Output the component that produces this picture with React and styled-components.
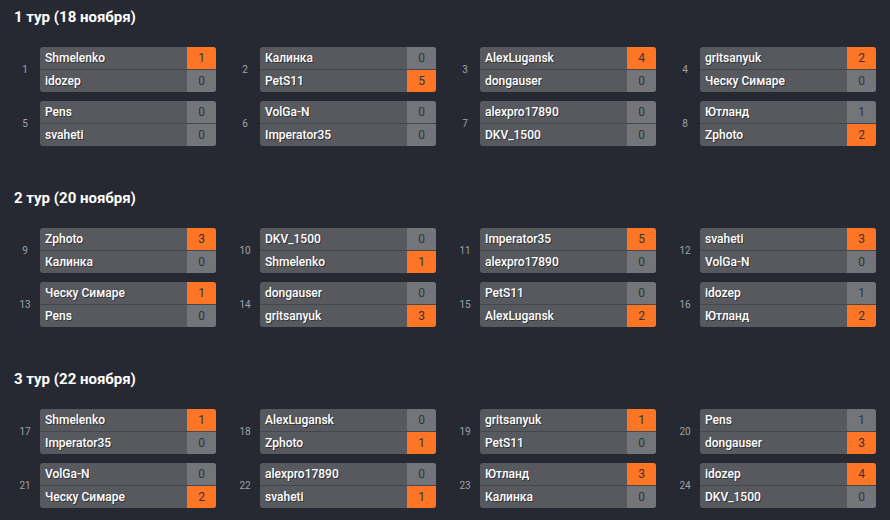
import React from "react";
import styled, {createGlobalStyle} from "styled-components";

const Global = createGlobalStyle`
  html, body {
    margin: 0;
    padding: 0;
    background: #272932;
  }
`;

const Page = styled.div`
  width: 890px;
  height: 520px;
  overflow: hidden;
  background: #272932;
  font-family: Roboto, "Liberation Sans", sans-serif;
  padding-top: 7px;
  box-sizing: border-box;
`;

const Section = styled.section`
  margin-bottom: 42px;
`;

const Title = styled.h2`
  margin: 0 0 20px 14px;
  font-size: 15px;
  line-height: 20px;
  font-weight: 700;
  color: #fff;
`;

const Grid = styled.div`
  display: grid;
  grid-template-columns: repeat(4, 220px);
  row-gap: 9px;
`;

const Match = styled.div`
  display: flex;
  align-items: center;
`;

const Num = styled.div`
  width: 30px;
  padding-left: 10px;
  text-align: center;
  font-size: 10px;
  color: #a0a1a6;
`;

const Box = styled.div`
  width: 176px;
  border-radius: 3px;
  overflow: hidden;
  background: #58595f;
`;

const Row = styled.div`
  display: flex;
  height: 22px;
  & + & {
    border-top: 1px solid #46474d;
  }
`;

const Name = styled.div`
  flex: 1;
  padding-left: 5px;
  font-size: 12px;
  font-weight: 500;
  line-height: 22px;
  color: #fff;
  text-shadow: 1px 1px 0 rgba(0, 0, 0, 0.45);
  white-space: nowrap;
`;

const Score = styled.div`
  width: 29px;
  text-align: center;
  font-size: 12px;
  line-height: 22px;
  color: #333;
  background: ${(p) => (p.win ? "#ff7526" : "#74757a")};
`;

const rounds = [
  {
    title: "1 тур (18 ноября)",
    matches: [
      [1, "Shmelenko", 1, "idozep", 0],
      [2, "Калинка", 0, "PetS11", 5],
      [3, "AlexLugansk", 4, "dongauser", 0],
      [4, "gritsanyuk", 2, "Ческу Симаре", 0],
      [5, "Pens", 0, "svaheti", 0],
      [6, "VolGa-N", 0, "Imperator35", 0],
      [7, "alexpro17890", 0, "DKV_1500", 0],
      [8, "Ютланд", 1, "Zphoto", 2],
    ],
  },
  {
    title: "2 тур (20 ноября)",
    matches: [
      [9, "Zphoto", 3, "Калинка", 0],
      [10, "DKV_1500", 0, "Shmelenko", 1],
      [11, "Imperator35", 5, "alexpro17890", 0],
      [12, "svaheti", 3, "VolGa-N", 0],
      [13, "Ческу Симаре", 1, "Pens", 0],
      [14, "dongauser", 0, "gritsanyuk", 3],
      [15, "PetS11", 0, "AlexLugansk", 2],
      [16, "idozep", 1, "Ютланд", 2],
    ],
  },
  {
    title: "3 тур (22 ноября)",
    matches: [
      [17, "Shmelenko", 1, "Imperator35", 0],
      [18, "AlexLugansk", 0, "Zphoto", 1],
      [19, "gritsanyuk", 1, "PetS11", 0],
      [20, "Pens", 1, "dongauser", 3],
      [21, "VolGa-N", 0, "Ческу Симаре", 2],
      [22, "alexpro17890", 0, "svaheti", 1],
      [23, "Ютланд", 3, "Калинка", 0],
      [24, "idozep", 4, "DKV_1500", 0],
    ],
  },
];

function App() {
  return (
    <Page>
      <Global />
      {rounds.map((r) => (
        <Section key={r.title}>
          <Title>{r.title}</Title>
          <Grid>
            {r.matches.map(([n, a, sa, b, sb]) => (
              <Match key={n}>
                <Num>{n}</Num>
                <Box>
                  <Row>
                    <Name>{a}</Name>
                    <Score win={sa > sb}>{sa}</Score>
                  </Row>
                  <Row>
                    <Name>{b}</Name>
                    <Score win={sb > sa}>{sb}</Score>
                  </Row>
                </Box>
              </Match>
            ))}
          </Grid>
        </Section>
      ))}
    </Page>
  );
}

export default App;
